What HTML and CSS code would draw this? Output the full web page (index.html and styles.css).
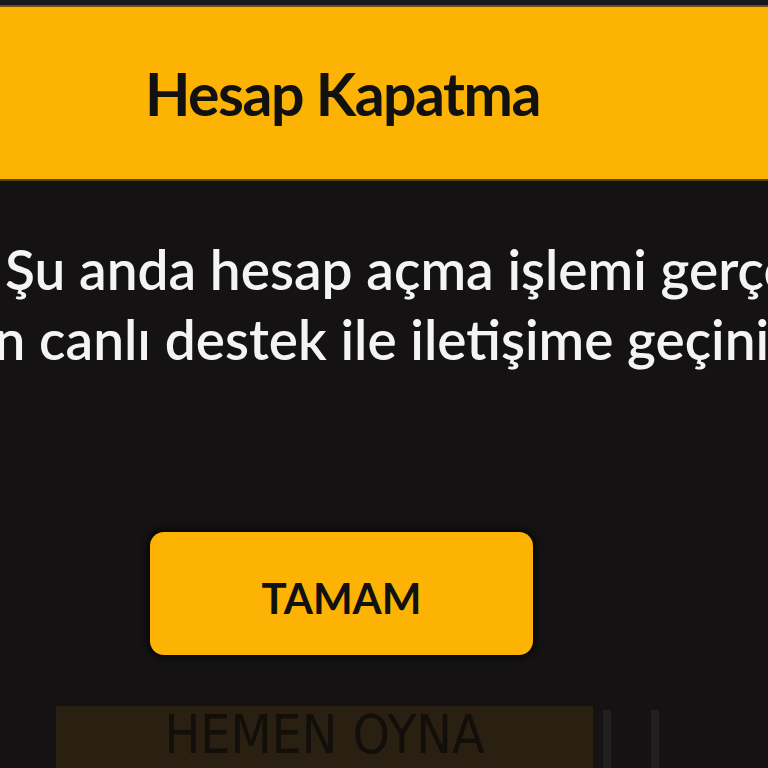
FILE: index.html
```html
<!DOCTYPE html>
<html lang="tr">
<head>
<meta charset="utf-8">
<link rel="stylesheet" href="styles.css">
</head>
<body>
<div class="topbar"></div>
<header class="header">
  <h1 class="title">Hesap Kapatma</h1>
</header>
<section class="message">
  <p class="line line-1">Şu anda hesap açma işlemi gerçekleştirilemiyor.</p>
  <p class="line line-2">Lütfen canlı destek ile iletişime geçiniz.</p>
</section>
<div class="actions">
  <button class="ok">TAMAM</button>
</div>
<div class="behind">
  <div class="play">HEMEN OYNA</div>
  <div class="side"><span></span><span></span></div>
</div>
</body>
</html>
```
FILE: styles.css
```css
html, body {
  margin: 0;
  padding: 0;
}
body {
  width: 768px;
  height: 768px;
  overflow: hidden;
  background: #141213;
  font-family: Lato, "Open Sans", sans-serif;
}
.topbar {
  height: 5px;
  background: #15181d;
  border-bottom: 2px solid #6b4f10;
}
.header {
  height: 172px;
  background: #fcb304;
  display: flex;
  align-items: center;
  padding-left: 145px;
  border-bottom: 2px solid #5a430f;
}
.title {
  margin: 0;
  font-size: 59px;
  font-weight: 700;
  color: #111;
  letter-spacing: -1.5px;
  white-space: nowrap;
}
.message {
  margin-top: 53px;
  color: #f4f4f4;
}
.line {
  margin: 0;
  font-size: 55px;
  font-weight: 600;
  line-height: 70px;
  white-space: nowrap;
}
.line-1 {
  margin-left: 5px;
}
.line-2 {
  margin-left: -130px;
}
.actions {
  margin-top: 158px;
  padding-left: 150px;
}
.ok {
  width: 383px;
  height: 123px;
  border: none;
  border-radius: 14px;
  background: #fcb304;
  color: #111;
  font-family: Lato, sans-serif;
  font-size: 42px;
  font-weight: 700;
  letter-spacing: 0;
  padding: 8px 0 0;
  box-shadow: 0 0 6px 3px rgba(0,0,0,0.6);
}
.behind {
  margin-top: 51px;
  display: flex;
  gap: 10px;
  padding-left: 56px;
}
.play {
  width: 537px;
  height: 70px;
  background: #2a2011;
  color: #120e0a;
  font-family: "DejaVu Sans", sans-serif;
  font-stretch: condensed;
  font-weight: 400;
  font-size: 53px;
  line-height: 58px;
  text-align: center;
  letter-spacing: 0;
}
.side {
  display: flex;
  gap: 40px;
  padding-top: 4px;
}
.side span {
  width: 8px;
  height: 70px;
  background: #221f20;
}
```
